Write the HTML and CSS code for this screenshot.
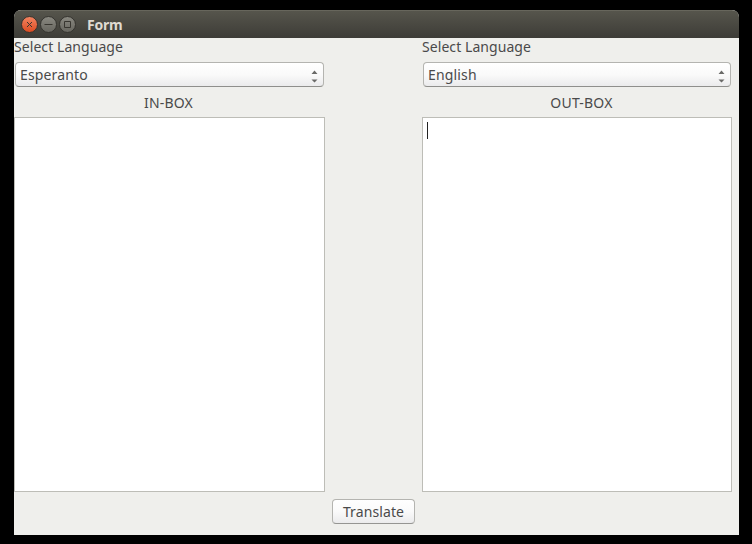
FILE: index.html
```html
<!DOCTYPE html>
<html lang="en">
<head>
<meta charset="utf-8">
<title>Form</title>
<link rel="stylesheet" href="styles.css">
</head>
<body>
<main class="window">
  <header class="titlebar">
    <svg class="controls" width="56" height="20" viewBox="0 0 56 20" aria-hidden="true">
      <defs>
        <linearGradient id="close" x2="0" y2="1"><stop stop-color="#f38562"/><stop offset="1" stop-color="#dc4a20"/></linearGradient>
        <linearGradient id="plain" x2="0" y2="1"><stop stop-color="#8a8981"/><stop offset="1" stop-color="#66655e"/></linearGradient>
      </defs>
      <g stroke="#34332e">
        <circle cx="9.5" cy="9.5" r="8" fill="url(#close)"/>
        <circle cx="28.5" cy="9.5" r="8" fill="url(#plain)"/>
        <circle cx="47.5" cy="9.5" r="8" fill="url(#plain)"/>
      </g>
      <g fill="none" stroke="#383630">
        <path d="M7 7l5 5M12 7l-5 5"/>
        <path d="M24.5 9.500h8"/>
        <path d="M44.5 6.500h6v6h-6z"/>
      </g>
    </svg>
    <h1 class="title">Form</h1>
  </header>
  <div class="columns">
    <section class="pane">
      <div class="label">Select Language</div>
      <div class="combo">
        <span class="value">Esperanto</span>
        <svg class="arrows" width="7" height="13" viewBox="0 0 7 13"><path d="M.5 4L3.5 .5 6.500 4zM.5 9.500h6L3.500 12.500z"/></svg>
      </div>
      <h2 class="heading">IN-BOX</h2>
      <div class="box"></div>
    </section>
    <section class="pane">
      <div class="label">Select Language</div>
      <div class="combo">
        <span class="value">English</span>
        <svg class="arrows" width="7" height="13" viewBox="0 0 7 13"><path d="M.5 4L3.5 .5 6.500 4zM.5 9.500h6L3.500 12.500z"/></svg>
      </div>
      <h2 class="heading heading-out">OUT-BOX</h2>
      <div class="box"><div class="caret"></div></div>
    </section>
  </div>
  <button class="translate" type="button">Translate</button>
</main>
</body>
</html>
```

FILE: styles.css
```css
* {
  box-sizing: border-box;
}

body {
  margin: 0;
  height: 544px;
  padding: 10px 13px 9px 14px;
  overflow: hidden;
  background: #000;
  color: #4a4a4a;
  font: 14px/20px "Noto Sans", "Open Sans", sans-serif;
}

.window {
  height: 525px;
  overflow: hidden;
  border-radius: 7px 7px 0 0;
  background: #efefec;
}

.titlebar {
  display: flex;
  align-items: center;
  height: 28px;
  padding-left: 6px;
  background: linear-gradient(#56554c, #3d3c37);
  border-top: 1px solid #67665c;
}

.controls {
  display: block;
  flex: none;
}

.title {
  margin: 0 0 0 11px;
  color: #dfdbd2;
  font-size: 14px;
  line-height: 20px;
  font-weight: 700;
  letter-spacing: -0.2px;
}

.columns {
  display: grid;
  grid-template-columns: 311px 310px;
  column-gap: 97px;
}

.pane {
  display: flex;
  flex-direction: column;
}

.label {
  height: 24px;
  line-height: 17px;
  letter-spacing: 0.07px;
}

.combo {
  display: flex;
  align-items: center;
  justify-content: space-between;
  height: 25px;
  margin: 0 1px;
  padding: 0 5px 0 4px;
  border: 1px solid #b4b4b0;
  border-bottom-color: #8f8f8c;
  border-radius: 4px;
  background: linear-gradient(#fff, #fafafa 50%, #ebebec);
}

.value {
  letter-spacing: 0.15px;
}

.arrows {
  margin-top: 4px;
  fill: #6a6a68;
}

.heading {
  height: 30px;
  margin: 0;
  padding-right: 2px;
  font-size: 14px;
  line-height: 32px;
  font-weight: 400;
  text-align: center;
  letter-spacing: 0.2px;
}

.heading-out {
  padding-left: 9px;
  padding-right: 0;
}

.box {
  height: 375px;
  padding: 4px;
  border: 1px solid #bdbdb7;
  background: #fff;
}

.caret {
  width: 1px;
  height: 17px;
  background: #222;
}

.translate {
  display: block;
  width: 83px;
  height: 25px;
  margin: 7px 0 0 318px;
  padding: 0;
  border: 1px solid #b4b4b0;
  border-bottom-color: #959592;
  border-radius: 4px;
  background: linear-gradient(#fff, #fafafa 50%, #ebebec);
  color: inherit;
  font: inherit;
  letter-spacing: 0.1px;
}
```
